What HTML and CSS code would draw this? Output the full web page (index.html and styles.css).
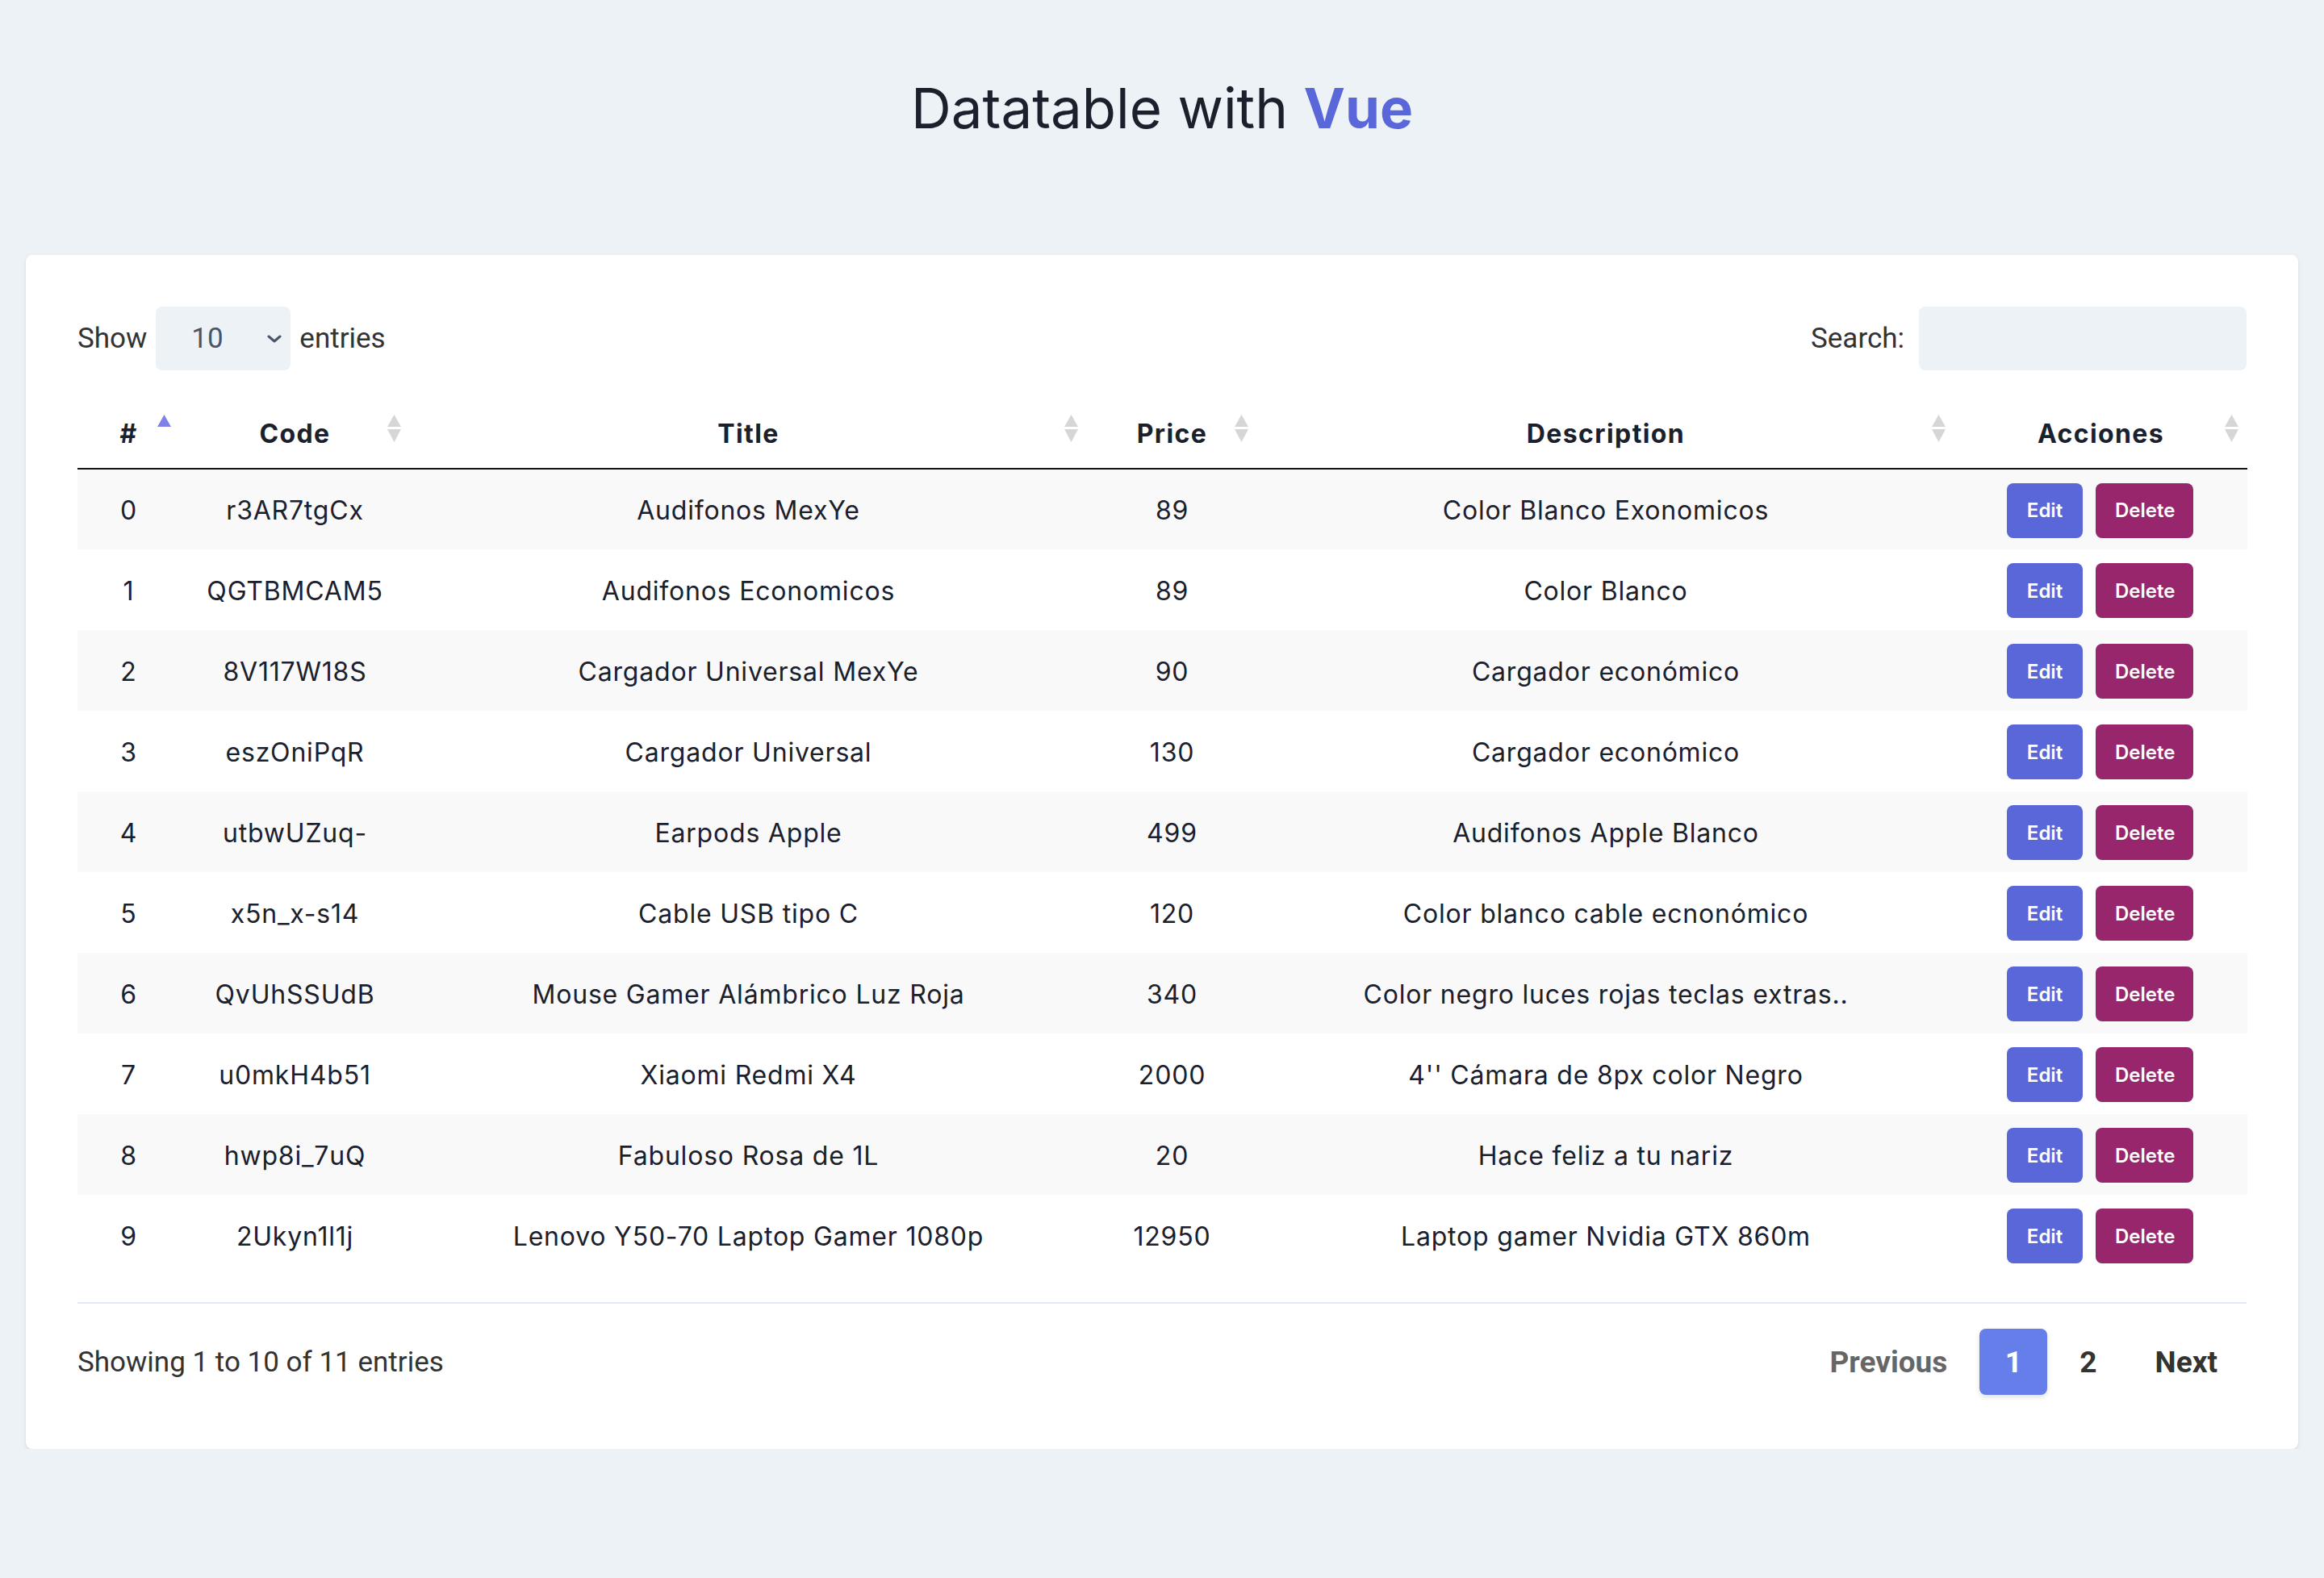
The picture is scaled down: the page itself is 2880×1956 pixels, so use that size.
FILE: index.html
```html
<!DOCTYPE html>
<html lang="es">
<head>
<meta charset="utf-8">
<title>Datatable with Vue</title>
<link rel="stylesheet" href="styles.css">
</head>
<body>
<h1 class="page-title">Datatable with <span class="brand">Vue</span></h1>
<main class="card">
  <div class="controls">
    <label class="length">
      <span>Show</span>
      <span class="select-wrap">
        <select class="select"><option>10</option><option>25</option><option>50</option></select>
        <svg class="chevron" viewBox="0 0 18 10" width="18" height="10"><path d="M2 2 L9 8 L16 2" fill="none" stroke="#4a5568" stroke-width="3" stroke-linecap="round" stroke-linejoin="round"/></svg>
      </span>
      <span>entries</span>
    </label>
    <label class="search">
      <span>Search:</span>
      <input class="search-input" type="text">
    </label>
  </div>

  <table class="table">
    <colgroup>
      <col class="c-num"><col class="c-code"><col class="c-title"><col class="c-price"><col class="c-desc"><col class="c-act">
    </colgroup>
    <thead>
      <tr>
        <th>#<svg class="sort" viewBox="0 0 18 34"><path d="M9 1 L17 15 L1 15 Z" fill="#7c82e6"/></svg></th>
        <th>Code<svg class="sort" viewBox="0 0 18 34"><path d="M9 1 L17 15 L1 15 Z" fill="#d6d6d6"/><path d="M9 33 L17 18 L1 18 Z" fill="#d6d6d6"/></svg></th>
        <th>Title<svg class="sort" viewBox="0 0 18 34"><path d="M9 1 L17 15 L1 15 Z" fill="#d6d6d6"/><path d="M9 33 L17 18 L1 18 Z" fill="#d6d6d6"/></svg></th>
        <th>Price<svg class="sort" viewBox="0 0 18 34"><path d="M9 1 L17 15 L1 15 Z" fill="#d6d6d6"/><path d="M9 33 L17 18 L1 18 Z" fill="#d6d6d6"/></svg></th>
        <th>Description<svg class="sort" viewBox="0 0 18 34"><path d="M9 1 L17 15 L1 15 Z" fill="#d6d6d6"/><path d="M9 33 L17 18 L1 18 Z" fill="#d6d6d6"/></svg></th>
        <th>Acciones<svg class="sort" viewBox="0 0 18 34"><path d="M9 1 L17 15 L1 15 Z" fill="#d6d6d6"/><path d="M9 33 L17 18 L1 18 Z" fill="#d6d6d6"/></svg></th>
      </tr>
    </thead>
    <tbody>
      <tr><td>0</td><td>r3AR7tgCx</td><td>Audifonos MexYe</td><td>89</td><td>Color Blanco Exonomicos</td><td><div class="actions"><button class="btn btn-edit">Edit</button><button class="btn btn-delete">Delete</button></div></td></tr>
      <tr><td>1</td><td>QGTBMCAM5</td><td>Audifonos Economicos</td><td>89</td><td>Color Blanco</td><td><div class="actions"><button class="btn btn-edit">Edit</button><button class="btn btn-delete">Delete</button></div></td></tr>
      <tr><td>2</td><td>8V117W18S</td><td>Cargador Universal MexYe</td><td>90</td><td>Cargador económico</td><td><div class="actions"><button class="btn btn-edit">Edit</button><button class="btn btn-delete">Delete</button></div></td></tr>
      <tr><td>3</td><td>eszOniPqR</td><td>Cargador Universal</td><td>130</td><td>Cargador económico</td><td><div class="actions"><button class="btn btn-edit">Edit</button><button class="btn btn-delete">Delete</button></div></td></tr>
      <tr><td>4</td><td>utbwUZuq-</td><td>Earpods Apple</td><td>499</td><td>Audifonos Apple Blanco</td><td><div class="actions"><button class="btn btn-edit">Edit</button><button class="btn btn-delete">Delete</button></div></td></tr>
      <tr><td>5</td><td>x5n_x-s14</td><td>Cable USB tipo C</td><td>120</td><td>Color blanco cable ecnonómico</td><td><div class="actions"><button class="btn btn-edit">Edit</button><button class="btn btn-delete">Delete</button></div></td></tr>
      <tr><td>6</td><td>QvUhSSUdB</td><td>Mouse Gamer Alámbrico Luz Roja</td><td>340</td><td>Color negro luces rojas teclas extras..</td><td><div class="actions"><button class="btn btn-edit">Edit</button><button class="btn btn-delete">Delete</button></div></td></tr>
      <tr><td>7</td><td>u0mkH4b51</td><td>Xiaomi Redmi X4</td><td>2000</td><td>4'' Cámara de 8px color Negro</td><td><div class="actions"><button class="btn btn-edit">Edit</button><button class="btn btn-delete">Delete</button></div></td></tr>
      <tr><td>8</td><td>hwp8i_7uQ</td><td>Fabuloso Rosa de 1L</td><td>20</td><td>Hace feliz a tu nariz</td><td><div class="actions"><button class="btn btn-edit">Edit</button><button class="btn btn-delete">Delete</button></div></td></tr>
      <tr><td>9</td><td>2Ukyn1l1j</td><td>Lenovo Y50-70 Laptop Gamer 1080p</td><td>12950</td><td>Laptop gamer Nvidia GTX 860m</td><td><div class="actions"><button class="btn btn-edit">Edit</button><button class="btn btn-delete">Delete</button></div></td></tr>
    </tbody>
  </table>

  <div class="footer">
    <div class="info">Showing 1 to 10 of 11 entries</div>
    <nav class="pager">
      <a class="page prev">Previous</a>
      <a class="page current">1</a>
      <a class="page">2</a>
      <a class="page next">Next</a>
    </nav>
  </div>
</main>
</body>
</html>
```

FILE: styles.css
```css
* { box-sizing: border-box; }

body {
  margin: 0;
  background: #edf2f7;
  font-family: Inter, "Noto Sans", sans-serif;
  color: #1a202c;
}

.page-title {
  margin: 92px 0 0;
  font-size: 69px;
  line-height: 84px;
  font-weight: 400;
  text-align: center;
  color: #1a202c;
}

.brand {
  font-weight: 700;
  color: #5a67d8;
}

.card {
  margin: 140px 32px 0;
  padding: 64px 64px 67px;
  background: #fff;
  border-radius: 8px;
  box-shadow: 0 2px 6px rgba(0, 0, 0, 0.08), 0 1px 2px rgba(0, 0, 0, 0.06);
}

.controls {
  display: flex;
  justify-content: space-between;
  align-items: center;
  height: 79px;
  font-family: Roboto, "Liberation Sans", sans-serif;
  font-size: 35px;
  color: #333;
}

.length, .search {
  display: flex;
  align-items: center;
  gap: 11px;
}

.search { gap: 18px; }

.select-wrap {
  position: relative;
  display: block;
  width: 167px;
  height: 79px;
}

.select {
  appearance: none;
  -webkit-appearance: none;
  width: 100%;
  height: 100%;
  border: 0;
  border-radius: 8px;
  background: #edf2f7;
  padding: 0 0 0 44px;
  font-family: Roboto, "Liberation Sans", sans-serif;
  font-size: 35px;
  color: #4a5568;
  outline: none;
}

.chevron {
  position: absolute;
  right: 11px;
  top: 35px;
  pointer-events: none;
}

.search-input {
  width: 406px;
  height: 79px;
  border: 0;
  border-radius: 8px;
  background: #edf2f7;
  outline: none;
}

.table {
  width: 100%;
  margin-top: 34px;
  border-collapse: collapse;
  table-layout: fixed;
  font-size: 32px;
}

.c-num { width: 127px; }
.c-code { width: 285px; }
.c-title { width: 839px; }
.c-price { width: 211px; }
.c-desc { width: 864px; }
.c-act { width: 363px; }

.table th {
  position: relative;
  height: 88px;
  padding: 2px 0 0;
  text-align: center;
  font-weight: 700;
  letter-spacing: 1.4px;
  color: #1a202c;
  border-bottom: 2px solid #111;
}

.sort {
  position: absolute;
  right: 10px;
  top: 20px;
  width: 19px;
  height: 36px;
}

.table td {
  height: 100px;
  padding: 2px 0 0;
  text-align: center;
  letter-spacing: 0.8px;
  color: #1a202c;
}

.table tbody tr:nth-child(odd) { background: #f9f9f9; }

.actions {
  display: flex;
  justify-content: center;
  gap: 16px;
  padding-right: 2px;
}

.btn {
  height: 68px;
  padding: 0 24px;
  border: 0;
  border-radius: 8px;
  color: #fff;
  font-family: Inter, "Noto Sans", sans-serif;
  font-size: 24px;
  font-weight: 600;
}

.btn-edit { background: #5a67d8; width: 94px; }
.btn-delete { background: #97266d; width: 121px; }

.footer {
  display: flex;
  justify-content: space-between;
  align-items: center;
  margin-top: 33px;
  padding-top: 31px;
  border-top: 2px solid #e2e8f0;
  font-family: Roboto, "Liberation Sans", sans-serif;
  font-size: 35px;
  color: #333;
}

.pager {
  display: flex;
  align-items: center;
  gap: 8px;
  font-size: 37px;
}

.page {
  display: flex;
  align-items: center;
  justify-content: center;
  height: 82px;
  padding: 0 32px;
  border-radius: 8px;
  font-weight: 700;
  color: #333;
}

.page.prev { color: #666; }
.page.next { padding-right: 36px; }

.page.current {
  width: 84px;
  padding: 0;
  background: #667eea;
  color: #fff;
  box-shadow: 0 3px 6px rgba(0, 0, 0, 0.12);
}
```
